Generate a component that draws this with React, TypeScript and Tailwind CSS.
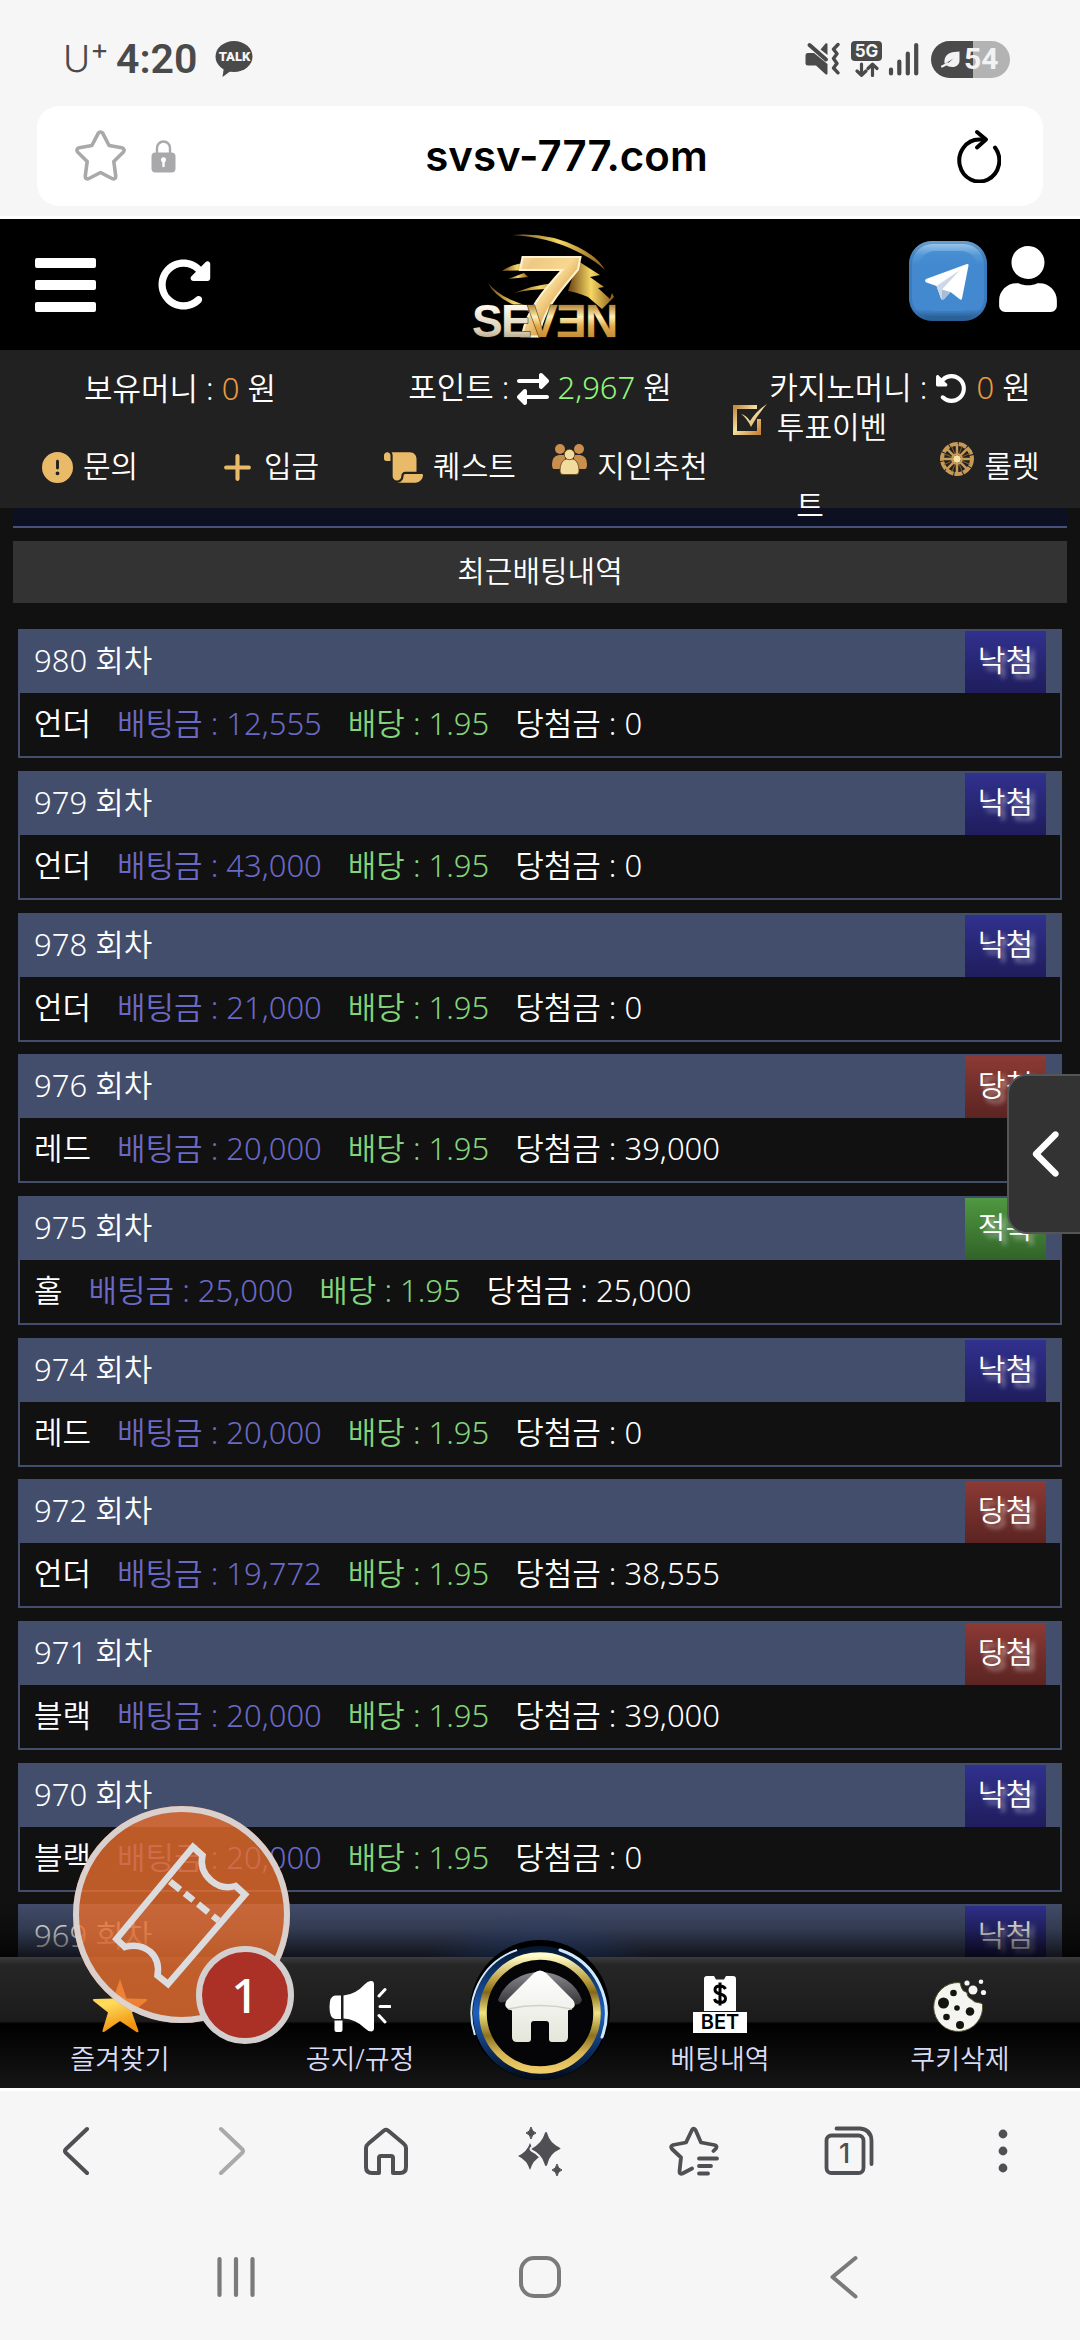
import type { ReactNode } from "react";
import {
  FaChevronLeft,
  FaCircleExclamation,
  FaPlus,
  FaRightLeft,
  FaRotateLeft,
  FaRotateRight,
  FaScroll,
} from "react-icons/fa6";
import { FaUser } from "react-icons/fa";

type Result = "낙첨" | "당첨" | "적특";
type Bet = { round: number; pick: string; stake: string; odds: string; win: string; result: Result };

const bets: Bet[] = [
  { round: 980, pick: "언더", stake: "12,555", odds: "1.95", win: "0", result: "낙첨" },
  { round: 979, pick: "언더", stake: "43,000", odds: "1.95", win: "0", result: "낙첨" },
  { round: 978, pick: "언더", stake: "21,000", odds: "1.95", win: "0", result: "낙첨" },
  { round: 976, pick: "레드", stake: "20,000", odds: "1.95", win: "39,000", result: "당첨" },
  { round: 975, pick: "홀", stake: "25,000", odds: "1.95", win: "25,000", result: "적특" },
  { round: 974, pick: "레드", stake: "20,000", odds: "1.95", win: "0", result: "낙첨" },
  { round: 972, pick: "언더", stake: "19,772", odds: "1.95", win: "38,555", result: "당첨" },
  { round: 971, pick: "블랙", stake: "20,000", odds: "1.95", win: "39,000", result: "당첨" },
  { round: 970, pick: "블랙", stake: "20,000", odds: "1.95", win: "0", result: "낙첨" },
  { round: 969, pick: "언더", stake: "20,000", odds: "1.95", win: "0", result: "낙첨" },
];

const resultStyle: Record<Result, string> = {
  낙첨: "from-[#31318f] to-[#1f1d5c]",
  당첨: "from-[#8d3a35] to-[#5b2422]",
  적특: "from-[#509841] to-[#316328]",
};

/* ---------- phone status bar ---------- */

function StatusBar() {
  return (
    <div className="flex h-[106px] items-center justify-between bg-[#f6f6f6] pt-3 pr-[70px] pb-0 pl-[63px] font-['Inter',sans-serif] text-[#4a4a4a]">
      <div className="flex items-center">
        <span className="flex w-[53px] items-start text-[37px] leading-10 font-light">
          U<span className="text-[28px] leading-5 font-normal">+</span>
        </span>
        <span className="font-['Roboto',sans-serif] text-[41px] leading-10 font-semibold">4:20</span>
        <span className="relative ml-[18px] flex h-9 w-[38px] justify-center">
          <svg viewBox="0 0 38 36" className="absolute inset-0" fill="#4a4a4a" aria-hidden="true">
            <ellipse cx="19" cy="15.5" rx="18.5" ry="15.5" />
            <path d="M9 26 7.500 36 17 29z" />
          </svg>
          <span className="relative font-['Roboto',sans-serif] text-[13px] leading-8 font-black text-[#f6f6f6]">TALK</span>
        </span>
      </div>
      <div className="flex items-center">
        <svg width="35" height="34" viewBox="0 0 35 34" fill="#4a4a4a" aria-hidden="true">
          <path d="M2.500 11H9l13.500 11v9.500a1.200 1.200 0 0 1-2 .8L11 23.500H3A2.500 2.500 0 0 1 .500 21v-7.500A2.500 2.500 0 0 1 2.500 11zM22.500 2v11L15.500 7.500 20.500 1.500a1.200 1.200 0 0 1 2 .5z" />
          <path d="M4.500 3 21 17.500" stroke="#4a4a4a" strokeWidth="4" strokeLinecap="round" />
          <path d="M33 2.500 28.500 7.200l3.500 4.600-3.500 4.800 3.500 4.800-3.500 4.600 4.500 4.800" fill="none" stroke="#4a4a4a" strokeWidth="3.400" strokeLinecap="round" strokeLinejoin="round" />
        </svg>
        <span className="ml-[11px] flex h-9 w-[31px] flex-col items-center">
          <span className="flex h-5 w-full items-center justify-center rounded bg-[#4a4a4a] text-[17px] leading-5 font-bold text-[#f6f6f6]">5G</span>
          <svg width="24" height="15" viewBox="0 0 24 15" className="mt-px" fill="none" stroke="#4a4a4a" strokeWidth="3.200" strokeLinecap="round" strokeLinejoin="round" aria-hidden="true">
            <path d="M6.500 2v11M2 9l4.500 4.300L11 9M17.500 13.500v-11M13 6.500l4.500-4.300L22 6.500" />
          </svg>
        </span>
        <svg width="31" height="34" viewBox="0 0 31 34" className="ml-1.5" stroke="#4a4a4a" strokeWidth="4.200" strokeLinecap="round" aria-hidden="true">
          <path d="M3 27.500v4M11.300 19.500v12M19.800 11.500v20M28.200 3v28.500" />
        </svg>
        <span className="ml-3 flex h-[37px] w-[79px] items-center rounded-full bg-gradient-to-r from-[#4a4a4a] from-[53%] to-[#b3b3b3] to-[53%] pl-2.5">
          <svg width="19" height="17" viewBox="0 0 19 17" fill="#f2f2f4" aria-hidden="true">
            <path d="M18.500.500v9c0 4-3 6.500-7 6.500-3 0-5-.7-6.200-2l7-6.500-8.500 5.500C2.500 8 5 3.500 9 2c3-1.200 6-1 9.500-1.500z" />
            <path d="m1 15.500 6-3" stroke="#f2f2f4" strokeWidth="2" strokeLinecap="round" />
          </svg>
          <span className="ml-1 font-['Roboto',sans-serif] text-[30px] leading-9 font-bold text-[#f2f2f4]">54</span>
        </span>
      </div>
    </div>
  );
}

const STAR =
  "M23.200 3.300a2.700 2.700 0 0 1 4.600 0l6.300 12.200 12.700 2.300c2.300.400 3 2.700 1.400 4.400L38.800 31.500l1.900 14.300c.300 2.400-1.700 3.800-3.700 2.700L25.500 42.500 14 48.500c-2 1.100-4-.300-3.700-2.700l1.900-14.300-9.400-9.300c-1.600-1.700-.900-4 1.400-4.400l12.700-2.300z";

function AddressBar() {
  return (
    <div className="border-b-[3px] border-white bg-[#f6f6f6] px-[37px] pb-2.5">
      <div className="flex h-[100px] items-center rounded-[22px] bg-white pr-[42px] pl-[38px]">
        <button aria-label="북마크 추가">
          <svg width="51" height="52" viewBox="0 0 51 52" fill="none" stroke="#a9a9ab" strokeWidth="3.600" strokeLinejoin="round" aria-hidden="true">
            <path d={STAR} />
          </svg>
        </button>
        <svg width="25" height="34" viewBox="0 0 25 34" className="ml-[25px]" aria-hidden="true">
          <path d="M6 14V9a6.500 6.500 0 0 1 13 0v5" fill="none" stroke="#a9a9ab" strokeWidth="2.400" />
          <rect x=".500" y="13.500" width="24" height="20" rx="4" fill="#a9a9ab" />
          <path d="M12.500 20.500v6.500" stroke="#fff" strokeWidth="2.400" strokeLinecap="round" />
          <circle cx="12.500" cy="20.800" r="2.500" fill="#fff" />
        </svg>
        <input
          aria-label="주소"
          readOnly
          value="svsv-777.com"
          className="min-w-0 flex-1 bg-transparent text-center font-['Inter',sans-serif] text-[42px] leading-[56px] font-semibold text-black outline-none"
        />
        <button aria-label="새로고침">
          <svg width="44" height="54" viewBox="0 0 44 54" fill="none" stroke="#000" strokeWidth="4" strokeLinecap="round" strokeLinejoin="round" aria-hidden="true">
            <path d="M38 18.500A20 21 0 1 1 22 10.500h6" />
            <path d="M20 3l9 7.500-9 8" />
          </svg>
        </button>
      </div>
    </div>
  );
}

/* ---------- site header ---------- */

function SevenLogo() {
  return (
    <svg width="156" height="112" viewBox="0 0 156 112" className="overflow-visible" aria-label="SEVEN 7" role="img">
      <defs>
        <linearGradient id="gold7" x1="0" y1="0" x2=".7" y2="1">
          <stop offset="0" stopColor="#fffbe6" />
          <stop offset=".3" stopColor="#efc983" />
          <stop offset=".55" stopColor="#f7d790" />
          <stop offset=".8" stopColor="#d08c35" />
          <stop offset="1" stopColor="#e8c163" />
        </linearGradient>
        <linearGradient id="goldWord" x1="0" y1="0" x2="0" y2="1">
          <stop offset=".2" stopColor="#b98a3c" />
          <stop offset=".42" stopColor="#fff0b5" />
          <stop offset=".6" stopColor="#e2a94b" />
          <stop offset="1" stopColor="#a87427" />
        </linearGradient>
        <linearGradient id="silverWord" x1="0" y1="0" x2="0" y2="1">
          <stop offset=".2" stopColor="#fffaf0" />
          <stop offset=".7" stopColor="#d8cdb5" />
          <stop offset="1" stopColor="#8d7a55" />
        </linearGradient>
        <linearGradient id="streak" x1="0" y1="0" x2="1" y2="0">
          <stop offset="0" stopColor="#6b4310" />
          <stop offset=".5" stopColor="#f6d765" />
          <stop offset="1" stopColor="#8a5a17" />
        </linearGradient>
      </defs>
      <g fill="url(#streak)">
        <path d="M44 6q36-3 66 12 20 10 27 23-10-10-29-19Q80 8 44 6z" />
        <path d="M34 42q12-8 24-8l-6 5 12 3q-16-1-30 0z" />
        <path d="M40 50l16-6 4 4z" />
        <path d="M20 54q10 12 26 18 14 6 28 8l-4 6q-18-6-28-12Q26 66 20 54z" />
        <path d="M46 64q20-8 40-10l12-2-14 8q-22 0-38 4z" />
        <path d="M110 32l22 14-10 2 14 10-6 1 12 11 2-6 2 4-12 12-14-12q-12-5-20-6z" />
      </g>
      <g fontFamily="'Liberation Sans',sans-serif" fontWeight="700">
        <text x="44" y="107" fontSize="115" fontStyle="italic" fill="url(#gold7)" stroke="#fff3cf" strokeWidth="2">
          7
        </text>
        <g fontSize="46" stroke="#2b1a05" strokeWidth="1" paintOrder="stroke">
          <text x="4" y="108" fill="url(#silverWord)">S</text>
          <text x="33" y="108" fill="url(#silverWord)">E</text>
          <text x="59" y="108" fill="url(#goldWord)">V</text>
          <text x="88" y="108" fill="url(#goldWord)">Ǝ</text>
          <text x="117" y="108" fill="url(#goldWord)">N</text>
        </g>
      </g>
    </svg>
  );
}

function TelegramIcon() {
  return (
    <svg width="78" height="80" viewBox="0 0 78 80" aria-hidden="true">
      <defs>
        <linearGradient id="tgFace" x1="0" y1="0" x2="0" y2="1">
          <stop offset="0" stopColor="#a9cdee" />
          <stop offset=".18" stopColor="#5398d6" />
          <stop offset=".3" stopColor="#4489cf" />
          <stop offset=".85" stopColor="#4489cf" />
          <stop offset="1" stopColor="#1f4c7a" />
        </linearGradient>
      </defs>
      <rect x="0" y="0" width="78" height="80" rx="23" fill="url(#tgFace)" />
      <rect x="1.500" y="1.500" width="75" height="77" rx="22" fill="none" stroke="#2f6eac" strokeOpacity=".5" strokeWidth="3" />
      <rect x="9" y="10" width="60" height="60" rx="18" fill="#4489cf" fillOpacity=".8" />
      <path d="M17 38 58 23q2-.500 1.500 1.500L53 57.500q-.500 2-2.200.800L41.500 51l-6.500 7q-2 1.500-3-.500L27.500 45l-10-3.500Q15 40 17 38z" fill="#fff" />
      <path d="M27.500 45 51 29 33 48.500 32.500 58.500z" fill="#cbd8e8" />
      <path d="M33 48.500 41.500 51 34 58.800q-1 .3-1.500-.6z" fill="#a9bdd6" />
    </svg>
  );
}

function GoldDefs() {
  return (
    <linearGradient id="goldFill" x1="0" y1="0" x2="1" y2="1">
      <stop offset="0" stopColor="#c68c3f" />
      <stop offset=".45" stopColor="#f5e0a0" />
      <stop offset="1" stopColor="#c9873c" />
    </linearGradient>
  );
}

const goldPicture = "mr-2.5 mb-5 inline-block align-middle";

function PeopleIcon() {
  return (
    <svg width="35" height="31" viewBox="0 0 35 31" className={goldPicture} aria-hidden="true">
      <g fill="#c98f4e">
        <circle cx="8" cy="5" r="5" />
        <circle cx="27" cy="5" r="5" />
        <path d="M0 20q0-8 7-9h6v14H2q-2 0-2-5zM35 20q0-8-7-9h-6v14h11q2 0 2-5z" />
      </g>
      <g fill="#f1dc9e" stroke="#5a3d1a" strokeWidth=".8">
        <path d="M8 27q0-10 6-12h7q6 2 6 12 0 3.500-3 3.500H11q-3 0-3-3.500z" />
        <circle cx="17.500" cy="10.500" r="5.200" />
      </g>
    </svg>
  );
}

function VoteIcon() {
  return (
    <svg width="34" height="32" viewBox="0 0 34 32" className={goldPicture} aria-hidden="true">
      <defs>
        <GoldDefs />
      </defs>
      <path d="M24 3H2v26h24V15" fill="none" stroke="url(#goldFill)" strokeWidth="4" />
      <path d="M8 10q5 1 9 7Q24 6 34 0q-9 10-16 23Q14 14 8 10z" fill="url(#goldFill)" />
    </svg>
  );
}

function RouletteIcon() {
  const spokes = [0, 45, 90, 135];
  return (
    <svg width="34" height="34" viewBox="0 0 34 34" className={goldPicture} aria-hidden="true">
      <g fill="none" stroke="#c79a58" strokeWidth="2">
        <circle cx="17" cy="17" r="15" strokeWidth="4" strokeDasharray="8 1" />
        <circle cx="17" cy="17" r="5" />
        {spokes.map((a) => (
          <path key={a} d="M17 2v30" transform={`rotate(${a} 17 17)`} strokeWidth="2.500" />
        ))}
        {spokes.map((a) => (
          <path key={a} d="M17 3v8M17 23v8" transform={`rotate(${a + 22} 17 17)`} strokeWidth="1" stroke="#84622f" />
        ))}
      </g>
      <circle cx="17" cy="17" r="3.500" fill="#f5e2a5" />
    </svg>
  );
}

const faIcon = "mr-2.5 mb-1 inline-block align-middle text-[#e9bb68]";

const shortcuts: { label: string; icon: ReactNode }[] = [
  { label: "문의", icon: <FaCircleExclamation className={faIcon} size={31} /> },
  { label: "입금", icon: <FaPlus className={faIcon} size={33} /> },
  { label: "퀘스트", icon: <FaScroll className={faIcon} size={39} /> },
  { label: "지인추천", icon: <PeopleIcon /> },
  { label: "투표이벤트", icon: <VoteIcon /> },
  { label: "룰렛", icon: <RouletteIcon /> },
];

function SiteHeader() {
  return (
    <header className="relative z-10">
      <div className="flex h-[131px] items-center bg-black">
        <div className="flex flex-1 items-center gap-[59px] pl-[35px]">
          <button aria-label="메뉴" className="flex flex-col gap-3">
            <span className="h-2.5 w-[61px] rounded-xs bg-white" />
            <span className="h-2.5 w-[61px] rounded-xs bg-white" />
            <span className="h-2.5 w-[61px] rounded-xs bg-white" />
          </button>
          <button aria-label="페이지 새로고침" className="text-white">
            <FaRotateRight size={57} />
          </button>
        </div>
        <a href="#home" aria-label="SEVEN 홈">
          <SevenLogo />
        </a>
        <div className="flex flex-1 items-center justify-end gap-3 pr-[23px] pb-2">
          <a href="#telegram" aria-label="텔레그램">
            <TelegramIcon />
          </a>
          <button aria-label="내 정보" className="pb-1 text-white">
            <FaUser className="h-[66px] w-[58px]" />
          </button>
        </div>
      </div>
      <div className="bg-[#212121] text-white">
        <div className="grid h-[76px] grid-cols-3 items-center text-center text-[31px] leading-10">
          <p>
            보유머니 : <span className="text-[#ea9b3e]">0</span> 원
          </p>
          <p>
            포인트 : <FaRightLeft className="mb-1 inline-block align-middle" size={32} />{" "}
            <span className="text-[#93f57c]">2,967</span> 원
          </p>
          <p>
            카지노머니 : <FaRotateLeft className="mb-1 inline-block align-middle" size={33} />{" "}
            <span className="text-[#ea9b3e]">0</span> 원
          </p>
        </div>
        <nav className="grid h-[82px] grid-cols-6 items-center pb-0.5 text-[30px]">
          {shortcuts.map((s) => (
            <a key={s.label} href="#shortcut" className="-my-10 block px-2.5 text-center leading-[78px]">
              {s.icon}
              {s.label}
            </a>
          ))}
        </nav>
      </div>
    </header>
  );
}

/* ---------- bet history ---------- */

function BetCard({ bet }: { bet: Bet }) {
  return (
    <li className="mb-[13px] border-2 border-[#434e6c] nth-[3n]:mb-3">
      <div className="flex h-[62px] items-stretch justify-between bg-[#434e6c] pr-3.5 pl-3.5">
        <h3 className="leading-[58px]">{bet.round} 회차</h3>
        <span
          className={`bg-gradient-to-b px-[13px] text-[30px] leading-[58px] [text-shadow:4px_4px_5px_rgba(255,255,255,0.6)] ${resultStyle[bet.result]}`}
        >
          {bet.result}
        </span>
      </div>
      <p className="flex h-[63px] gap-[26px] px-3.5 leading-[60px]">
        <span>{bet.pick}</span>
        <span className="text-[#6a69c6]">배팅금 : {bet.stake}</span>
        <span className="text-[#83d47b]">배당 : {bet.odds}</span>
        <span>당첨금 : {bet.win}</span>
      </p>
    </li>
  );
}

function SideTab() {
  return (
    <button
      aria-label="패널 열기"
      className="absolute top-[566px] right-0 flex h-40 w-[73px] items-center justify-center rounded-l-[20px] border-y-2 border-l-2 border-[#555] bg-[#333] pl-2 text-white"
    >
      <FaChevronLeft size={52} />
    </button>
  );
}

/* ---------- bottom navigation of the site ---------- */

function StarIcon() {
  return (
    <svg width="56" height="56" viewBox="0 0 56 56" aria-hidden="true">
      <defs>
        <linearGradient id="starFill" x1="0" y1="0" x2=".3" y2="1">
          <stop offset="0" stopColor="#ffb545" />
          <stop offset=".5" stopColor="#ffdc5c" />
          <stop offset="1" stopColor="#f0920f" />
        </linearGradient>
      </defs>
      <path
        d="M28 2 34.500 21.500 54 22q2 .5.500 2L40 35.500 46.500 54q0 2-2 1L28 44 12 55q-2 .5-1.500-1.500L16 35.500 1.500 24Q0 22.500 2 22l19.500-.5z"
        fill="url(#starFill)"
      />
    </svg>
  );
}

function HornIcon() {
  return (
    <svg width="62" height="52" viewBox="0 0 62 52" fill="#fff" aria-hidden="true">
      <path d="M6 14.500h6v23.500H6q-5.500-1-5.500-12T6 14.500z" />
      <path d="M14.500 14.500q12-1 21-11 4-4 7.500-3.500 2 .5 2 3v44q0 3-2.500 3.500-3.500 0-7-3.500-9-9-21-9.500z" />
      <path d="M5.500 39.500h8V49q0 2-2 2h-4q-2 0-2-2z" />
      <path d="M50 15l6-6.500M51 25.500h10M50 34.500l6 6.500" stroke="#fff" strokeWidth="3" strokeLinecap="round" />
    </svg>
  );
}

function BetIcon() {
  return (
    <span className="flex w-[54px] flex-col items-center">
      <svg width="36" height="36" viewBox="0 0 36 36" aria-hidden="true">
        <path d="M5 1h7l2 3.500h8L24 1h7q3 0 3 3v32H2V4q0-3 3-3z" fill="#fff" />
        <path d="M23.500 14q-1.500-3-5.500-3-5 0-5 3.800 0 3 5 4.200 5.500 1.200 5.500 4.500 0 4-5.500 4-4.500 0-5.500-3.500M18 7.500v23" fill="none" stroke="#000" strokeWidth="3" />
      </svg>
      <span className="mt-px w-full bg-white text-center font-['Inter',sans-serif] text-[20px] leading-[21px] font-semibold text-black">BET</span>
    </span>
  );
}

function CookieIcon() {
  return (
    <svg width="54" height="54" viewBox="0 0 54 54" aria-hidden="true">
      <path
        d="M26 3.500q2 .5 2 4 1 5 6 6 0 5 5 7 2 3 6 3 3 .5 4.500 1.500A24.500 24.500 0 1 1 26 3.500z"
        fill="#f4f4f1"
        stroke="#55502c"
        strokeWidth="1"
      />
      <g fill="#15140c">
        <circle cx="10.500" cy="24" r="5.500" />
        <circle cx="20.500" cy="14" r="3.300" />
        <circle cx="24" cy="29" r="2.800" />
        <circle cx="13.500" cy="38" r="3.300" />
        <circle cx="37" cy="32.500" r="4.300" />
        <circle cx="27" cy="46" r="4" />
      </g>
      <g fill="#f4f4f1">
        <circle cx="40" cy="11" r="4.500" />
        <circle cx="34" cy="4" r="2.600" />
        <circle cx="48" cy="2.800" r="2.300" />
        <circle cx="50.500" cy="13.500" r="2.600" />
      </g>
    </svg>
  );
}

function HomeButton() {
  return (
    <svg width="140" height="140" viewBox="0 0 140 140" aria-hidden="true">
      <defs>
        <linearGradient id="ringGold" x1="0" y1="0" x2="0" y2="1">
          <stop offset="0" stopColor="#fffcc9" />
          <stop offset=".22" stopColor="#b89a3a" />
          <stop offset=".32" stopColor="#84691c" />
          <stop offset=".5" stopColor="#f3e480" />
          <stop offset=".7" stopColor="#8d7220" />
          <stop offset=".85" stopColor="#d5b455" />
          <stop offset="1" stopColor="#eecb68" />
        </linearGradient>
        <linearGradient id="ringBlue" x1="0" y1="0" x2="0" y2="1">
          <stop offset="0" stopColor="#04152c" />
          <stop offset=".5" stopColor="#1d5fc0" />
          <stop offset="1" stopColor="#020a16" />
        </linearGradient>
        <linearGradient id="gloss" x1="0" y1="0" x2="0" y2="1">
          <stop offset="0" stopColor="#8b8a90" />
          <stop offset="1" stopColor="#333338" />
        </linearGradient>
        <linearGradient id="houseFill" x1="0" y1="0" x2="0" y2="1">
          <stop offset="0" stopColor="#fff" />
          <stop offset="1" stopColor="#e4e6da" />
        </linearGradient>
      </defs>
      <circle cx="70" cy="70" r="70" fill="#000" />
      <circle cx="70" cy="73" r="67" fill="url(#ringBlue)" />
      <path d="M5 95A67 67 0 0 1 47 10" fill="none" stroke="#cfeaff" strokeWidth="2" />
      <path d="M90 10A67 67 0 0 1 132 97" fill="none" stroke="#cfeaff" strokeWidth="3" strokeLinecap="round" />
      <circle cx="70" cy="73" r="57" fill="#050507" stroke="url(#ringGold)" strokeWidth="7.500" />
      <path d="M28 60A44 40 0 0 1 112 60Q108 70 96 58 70 38 44 58 30 66 28 60z" fill="url(#gloss)" />
      <path
        d="M64 33q6-5 12 0l27 27q3 4 1 7-2 2.500-6 3.500V97q0 5-5 5H82q-3 0-3-3V84q0-3-3-3H64q-3 0-3 3v15q0 3-3 3H47q-5 0-5-5V70.500q-4-1-6-3.500-2-3 1-7z"
        fill="url(#houseFill)"
      />
      <path d="M38 69q32-7 64 0" fill="none" stroke="#cfd1c8" strokeWidth="1.500" />
    </svg>
  );
}

function TabItem({ label, icon }: { label: string; icon: ReactNode }) {
  return (
    <a href="#tab" className="flex flex-2 flex-col items-center text-[27px] leading-[48px] text-[#d9dcf6]">
      <span className="flex h-[78px] items-end pb-0.5">{icon}</span>
      {label}
    </a>
  );
}

function SiteTabs() {
  return (
    <nav className="relative">
      <div className="absolute inset-x-0 bottom-full h-14 bg-gradient-to-t from-black/75 via-black/25 to-transparent" />
      <div className="absolute bottom-0 left-1/2 h-[180px] w-[260px] -translate-x-1/2 bg-[radial-gradient(closest-side,#1c3f8699,transparent)]" />
      <div className="relative flex h-[131px] bg-[linear-gradient(#3c3c3c_0%,#262626_6%,#1b1b1b_49%,#000_51%,#161616_100%)]">
        <TabItem label="즐겨찾기" icon={<StarIcon />} />
        <TabItem label="공지/규정" icon={<HornIcon />} />
        <a href="#main" aria-label="홈" className="relative flex-1">
          <span className="absolute bottom-2 left-1/2 w-[140px] -translate-x-1/2">
            <HomeButton />
          </span>
        </a>
        <TabItem label="베팅내역" icon={<BetIcon />} />
        <TabItem label="쿠키삭제" icon={<CookieIcon />} />
      </div>
      <button aria-label="베팅 카트, 1건" className="absolute bottom-[44px] left-[73px] h-[238px] w-[221px]">
        <span className="absolute top-0 left-0 flex h-[217px] w-[217px] items-center justify-center rounded-full bg-[#e96e2e]/80">
          <span className="absolute inset-0 rounded-full border-[6px] border-[#dcdcde]/90" />
          <svg width="217" height="217" viewBox="0 0 217 217" fill="none" stroke="#dcdcdf" strokeWidth="6.500" aria-hidden="true">
            <path d="M120 41 129.500 49.500Q126 64 138 74.500 149 84 162.500 80L172 88.500 95 178 84.500 169.500Q87 154 77 145.500 66 137 52 141L43.500 133z" />
            <path d="M97 75.500 145.500 114.500" strokeDasharray="13 6 11 6" />
          </svg>
        </span>
        <span className="absolute right-0 bottom-0 flex h-[98px] w-[98px] items-center justify-center rounded-full border-[6px] border-[#d4cfcf] bg-[#ab3127] font-['Noto_Sans',sans-serif] text-[48px] leading-none font-medium text-white">
          1
        </span>
      </button>
    </nav>
  );
}

/* ---------- browser toolbar and system keys ---------- */

function ToolButton({ label, children }: { label: string; children: ReactNode }) {
  return (
    <button aria-label={label} className="flex flex-1 items-center justify-center">
      {children}
    </button>
  );
}

function BrowserBar() {
  return (
    <div className="flex h-[126px] border-t-[3px] border-white pb-1 text-[#4f4f54]">
      <ToolButton label="뒤로">
        <svg width="28" height="50" viewBox="0 0 28 50" fill="none" stroke="currentColor" strokeWidth="4" strokeLinecap="round" strokeLinejoin="round" aria-hidden="true">
          <path d="M24 3 2.500 23.500q-1 1.500 0 3L24 47" />
        </svg>
      </ToolButton>
      <ToolButton label="앞으로">
        <svg width="28" height="50" viewBox="0 0 28 50" fill="none" stroke="#aaaaac" strokeWidth="4" strokeLinecap="round" strokeLinejoin="round" aria-hidden="true">
          <path d="m4 3 21.500 20.500q1 1.500 0 3L4 47" />
        </svg>
      </ToolButton>
      <ToolButton label="홈">
        <svg width="44" height="48" viewBox="0 0 44 48" fill="none" stroke="currentColor" strokeWidth="4" strokeLinejoin="round" aria-hidden="true">
          <path d="M20 3.500q2-1.500 4 0L39.500 16.500q2.500 2 2.500 4.500V40q0 6-6 6h-7V31q0-2-2-2H17q-2 0-2 2v15H8q-6 0-6-6V21q0-2.500 2.500-4.500z" />
        </svg>
      </ToolButton>
      <ToolButton label="AI 도우미">
        <svg width="44" height="50" viewBox="0 0 44 50" fill="currentColor" aria-hidden="true">
          <path d="M13 1q1 5 5 6-4 1-5 6-1-5-5-6 4-1 5-6z" stroke="currentColor" strokeWidth="1" />
          <path d="M12 17q3 9 11 13-8 4-11 14-3-10-12-14 9-4 12-13z" />
          <path
            d="M28 5q2 0 2.500 3 2 8 12 13 2 1.500 0 3-10 4.500-12 14-.5 3-2.500 3t-2.500-3q-2.500-9-12-13.500-2-1.500 0-3 9.500-5 12-13.500.5-3 2.500-3z"
            stroke="#f6f6f6"
            strokeWidth="2"
          />
          <path d="M39 38q1 5 5 6-4 1-5 6-1-5-5-6 4-1 5-6z" stroke="currentColor" strokeWidth="1" />
        </svg>
      </ToolButton>
      <ToolButton label="북마크">
        <svg width="50" height="50" viewBox="0 0 50 50" fill="none" stroke="currentColor" strokeWidth="3.800" strokeLinecap="round" strokeLinejoin="round" aria-hidden="true">
          <path d="M23 42.500 13.500 47.500q-3 1-3-2l1.500-14L3 23q-2-3 1-4l13-2.500L23 4q1.500-2.500 3.500 0L32 16.500 45.500 19q3.500 1 1 4L44.500 25" />
          <path d="M30 32.500h18M30 40h12M30 47.500h9" />
        </svg>
      </ToolButton>
      <ToolButton label="탭 1개">
        <span className="relative flex h-[50px] w-[50px]">
          <svg viewBox="0 0 50 50" className="absolute inset-0" fill="none" stroke="currentColor" strokeWidth="3.800" strokeLinecap="round" aria-hidden="true">
            <rect x="2.500" y="9.500" width="37" height="37.500" rx="5" />
            <path d="M12.500 2.500H36q11 1 11.500 12V38" />
          </svg>
          <span className="mt-[9px] ml-0.5 w-[38px] text-center font-['Inter',sans-serif] text-[27px] leading-[38px] font-medium">1</span>
        </span>
      </ToolButton>
      <ToolButton label="더보기">
        <svg width="10" height="44" viewBox="0 0 10 44" fill="currentColor" aria-hidden="true">
          <circle cx="5" cy="5" r="4.400" />
          <circle cx="5" cy="22" r="4.400" />
          <circle cx="5" cy="39" r="4.400" />
        </svg>
      </ToolButton>
    </div>
  );
}

function SystemKeys() {
  return (
    <div className="flex h-[126px] px-[84px] text-[#7a7a7a]">
      <ToolButton label="최근 앱">
        <svg width="40" height="42" viewBox="0 0 40 42" stroke="currentColor" strokeWidth="4.200" strokeLinecap="round" aria-hidden="true">
          <path d="M3.500 3v36M20 3v36M36.500 3v36" />
        </svg>
      </ToolButton>
      <ToolButton label="홈 화면">
        <span className="h-[42px] w-[42px] rounded-[15px] border-4 border-[#7a7a7a]" />
      </ToolButton>
      <ToolButton label="이전">
        <svg width="28" height="44" viewBox="0 0 28 44" fill="none" stroke="currentColor" strokeWidth="4" strokeLinecap="round" strokeLinejoin="round" aria-hidden="true">
          <path d="M25.500 3 2.500 22l23 19.500" />
        </svg>
      </ToolButton>
    </div>
  );
}

export default function App() {
  return (
    <div className="flex h-screen flex-col overflow-hidden bg-[#111] font-['Noto_Sans','Noto_Sans_CJK_KR',sans-serif] font-[350]">
      <StatusBar />
      <AddressBar />
      <SiteHeader />
      <main className="relative min-h-0 flex-1 px-[13px] text-[31px] text-white">
        <div className="h-full overflow-hidden">
          <div className="h-5 border-b-2 border-[#46527a] bg-[#0d1020]" />
          <h2 className="mt-[13px] h-[62px] bg-[#333] text-center text-[30px] leading-[60px]">최근배팅내역</h2>
          <ul className="mt-[26px] px-[5px]">
            {bets.map((b) => (
              <BetCard key={b.round} bet={b} />
            ))}
          </ul>
        </div>
        <SideTab />
      </main>
      <SiteTabs />
      <footer className="bg-[#f6f6f6]">
        <BrowserBar />
        <SystemKeys />
      </footer>
    </div>
  );
}
